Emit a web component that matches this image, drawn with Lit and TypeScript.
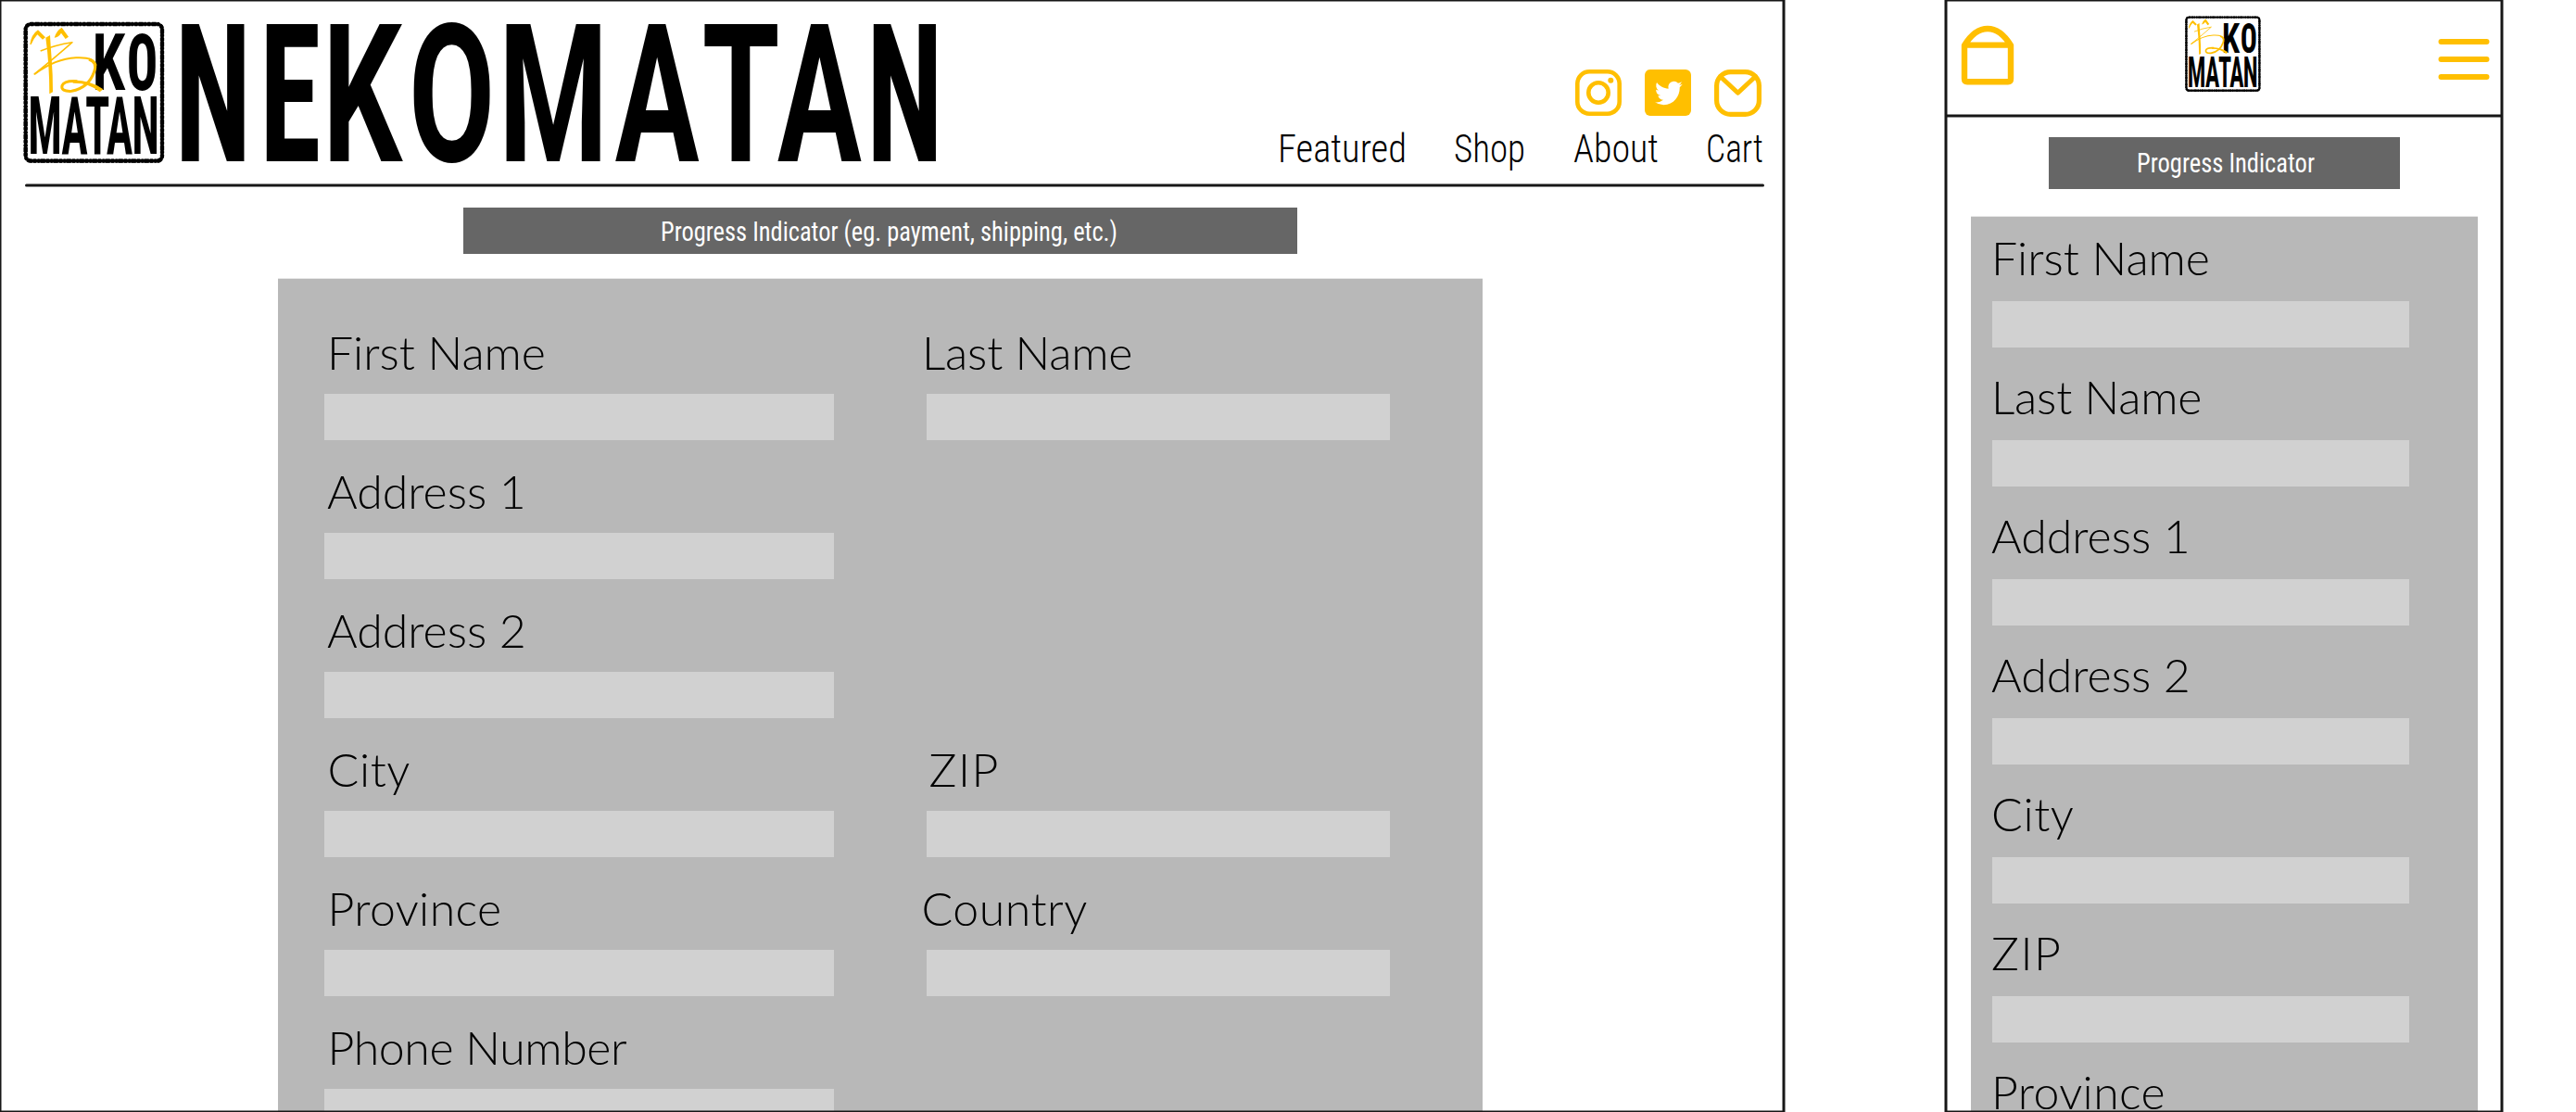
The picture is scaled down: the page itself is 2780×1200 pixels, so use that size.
import { LitElement, html, css, svg } from "lit";
import { customElement, property } from "lit/decorators.js";

const shared = css`
  * {
    box-sizing: border-box;
  }
  svg {
    display: block;
    overflow: visible;
    flex: none;
  }
  .narrow {
    font-family: "Roboto Condensed", Roboto, sans-serif;
    font-weight: 300;
  }
  .display {
    font-family: Roboto, sans-serif;
    font-weight: 700;
    font-kerning: none;
  }
`;

/** One glyph of a display word: character, origin, width axis (percent). */
type Glyph = [string, number, number];

const glyphs = (list: Glyph[]) =>
  list.map(([ch, x, wdth]) => svg`<tspan x=${x} style="font-stretch:${wdth}%">${ch}</tspan>`);

const TITLE: Glyph[] = [
  ["N", -11.5, 75],
  ["E", 129.1, 75],
  ["K", 234, 100],
  ["O", 377, 100],
  ["M", 526, 100],
  ["A", 719.7, 100],
  ["T", 864.2, 100],
  ["A", 989.3, 100],
  ["N", 1137, 75],
];

const STAMP_TOP: Glyph[] = [
  ["K", 461, 100],
  ["O", 632, 75],
];

const STAMP_BOTTOM: Glyph[] = [
  ["M", 195.6, 100],
  ["A", 425.7, 100],
  ["T", 590.7, 100],
  ["A", 736.3, 100],
  ["N", 910.5, 100],
];

/** Square stamp logo: hand-drawn mark, KO, and MATAN inside a rounded frame. */
@customElement("neko-logo")
class NekoLogo extends LitElement {
  @property({ type: Number }) size = 153;

  static styles = [
    shared,
    css`
      :host {
        display: block;
        flex: none;
      }
      .frame {
        fill: #fff;
        stroke: #000;
        stroke-width: 11;
      }
      .rough {
        fill: none;
        stroke: #000;
        stroke-width: 13;
        stroke-dasharray: 9 4 15 3 6 5;
      }
      .mark {
        fill: #ffbf00;
      }
      .line {
        fill: none;
        stroke: #ffbf00;
        stroke-linejoin: round;
      }
      .display {
        font-weight: 800;
      }
    `,
  ];

  render() {
    return html`<svg width=${this.size} height=${this.size} viewBox="75 69 459 459">
      <rect class="frame" x="83" y="78" width="442" height="443" rx="17" />
      <rect class="rough" x="83" y="78" width="442" height="443" rx="17" />
      <text class="display" transform="translate(0 291) scale(.65 1)" font-size="253">${glyphs(STAMP_TOP)}</text>
      <text class="display" transform="translate(0 498) scale(.47 1)" font-size="260">${glyphs(STAMP_BOTTOM)}</text>
      <path class="mark" d="M97 144 Q101 112 123 97 L147 121 L138 128 L121 112 Q108 126 101 144Z" />
      <path class="mark" d="M176 122 Q182 100 200 89 L222 119 L212 126 L198 107 Q190 120 176 122Z" />
      <path class="mark" d="M148 122 L162 114 Q164 150 167 190 Q171 240 171 298 L160 304 Q160 210 148 122Z" />
      <path class="line" stroke-width="4.5" d="M131 165 Q180 145 234 137 Q180 185 110 241" />
      <path class="line" stroke-width="6" d="M112 240 Q180 190 246 187 Q305 184 311 212" />
      <path class="line" stroke-width="9" d="M288 192 Q316 202 305 232 Q287 285 232 295 Q196 297 201 277 Q208 260 250 263" />
      <path class="mark" d="M236 259 Q300 262 334 289 L323 298 Q290 268 236 269Z" />
    </svg>`;
  }
}

const TRACKING: Record<string, number> = {
  "Last Name": -0.2,
  City: 0.6,
  ZIP: 1.5,
  Province: 0.4,
  Country: 0.5,
  "Phone Number": -0.4,
};

/** Label above an empty input block. */
@customElement("form-field")
class FormField extends LitElement {
  @property() label = "";
  @property({ type: Number }) inset = 0;

  static styles = [
    shared,
    css`
      :host {
        display: block;
        height: 150px;
      }
      .label {
        height: 100px;
        padding-top: var(--label-top, 25px);
        font: 300 50px/60px Lato, sans-serif;
        color: #000;
        white-space: nowrap;
      }
      .input {
        height: 50px;
        background: #d1d1d1;
      }
    `,
  ];

  render() {
    return html`
      <div class="label" style="text-indent:${this.inset}px;letter-spacing:${TRACKING[this.label] ?? 0}px">${this.label}</div>
      <div class="input"></div>
    `;
  }
}

@customElement("app-root")
class AppRoot extends LitElement {
  static styles = [
    shared,
    css`
      :host {
        display: flex;
        width: 2780px;
        height: 1200px;
        overflow: hidden;
        background: #fff;
      }
      .screen {
        position: relative;
        flex: none;
        height: 1200px;
      }
      .desktop {
        width: 1925px;
        margin-right: 175px;
      }
      .mobile {
        width: 600px;
        --label-top: 23px;
      }
      .outline {
        position: absolute;
        left: 0;
        top: 0;
        fill: none;
        stroke: #171717;
        stroke-width: 3;
      }
      .head {
        display: flex;
        height: 198px;
        padding: 23px 23px 0 25px;
      }
      .title {
        margin-left: 18px;
      }
      .menu {
        display: flex;
        flex-direction: column;
        align-items: flex-end;
        margin-left: auto;
        padding-top: 52px;
      }
      .icons {
        display: flex;
        gap: 25px;
        fill: #ffbf00;
        padding-right: 1px;
      }
      .stroke {
        fill: none;
        stroke: #ffbf00;
        stroke-linecap: round;
        stroke-linejoin: round;
      }
      .nav {
        display: flex;
        margin: 9px -1px 0 0;
      }
      .rule {
        margin-left: 27px;
      }
      .progress {
        display: flex;
        justify-content: center;
        background: #666;
        fill: #fff;
      }
      .progress .narrow {
        font-weight: 400;
      }
      .desktop .progress {
        width: 900px;
        height: 50px;
        margin: 22px 0 0 500px;
        padding-left: 19px;
      }
      .mobile .progress {
        width: 379px;
        height: 56px;
        margin: 21px 0 0 111px;
        padding-left: 3px;
      }
      .panel {
        background: #b8b8b8;
        border-top: 1px solid #e8e8e8;
        overflow: hidden;
      }
      .desktop .panel {
        display: grid;
        grid-template-columns: 560px 500px;
        grid-auto-rows: 150px;
        column-gap: 90px;
        align-content: start;
        width: 1300px;
        height: 900px;
        margin: 26px 0 0 300px;
        padding: 24px 0 0 50px;
      }
      .mobile .panel {
        width: 547px;
        height: 967px;
        margin: 29px 0 0 27px;
        padding: 0 74px 0 23px;
      }
      .mobile .first {
        margin-top: -9px;
      }
      .bar {
        display: flex;
        height: 123px;
        padding: 17px 13px 0 16px;
      }
      .bar neko-logo {
        margin: 0 191px 0 183.5px;
      }
    `,
  ];

  private desktopFields: Array<[string, number] | null> = [
    ["First Name", 3],
    ["Last Name", -5],
    ["Address 1", 3],
    null,
    ["Address 2", 3],
    null,
    ["City", 3.5],
    ["ZIP", 2.5],
    ["Province", 3.5],
    ["Country", -5.5],
    ["Phone Number", 3.5],
    null,
  ];

  private mobileFields = ["First Name", "Last Name", "Address 1", "Address 2", "City", "ZIP", "Province"];

  /** Single line of condensed text stretched to an exact width; y is the baseline. */
  private fit(text: string, width: number, size: number, height: number, y: number) {
    return html`<svg width=${width} height=${height}>
      <text class="narrow" x="0" y=${y} font-size=${size} textLength=${width} lengthAdjust="spacingAndGlyphs">${text}</text>
    </svg>`;
  }

  private outline(width: number) {
    return html`<svg class="outline" width=${width} height="1200">
      <rect x="0" y="0" width=${width} height="1200" />
    </svg>`;
  }

  private navItem(text: string, width: number, gap: number) {
    return html`<div style="margin-left:${gap}px">${this.fit(text, width, 42, 50, 40)}</div>`;
  }

  render() {
    return html`
      <section class="screen desktop">
        <header class="head">
          <neko-logo size="153"></neko-logo>
          <svg class="title" width="820" height="153">
            <text class="display" transform="translate(0 151) scale(.65 1)" font-size="208">${glyphs(TITLE)}</text>
          </svg>
          <div class="menu">
            <div class="icons">
              <svg width="50" height="50">
                <rect class="stroke" x="2.3" y="2.3" width="45.4" height="45.4" rx="13" stroke-width="4.6" />
                <circle class="stroke" cx="25" cy="25" r="10.7" stroke-width="4.6" />
                <circle cx="38.3" cy="11.7" r="3" />
              </svg>
              <svg width="50" height="50">
                <rect width="50" height="50" rx="6" />
                <path
                  fill="#fff"
                  transform="translate(11 9.9) scale(1.24 1.3)"
                  d="M23.95 4.57a10 10 0 0 1-2.82.77 4.96 4.96 0 0 0 2.16-2.72c-.95.55-2 .95-3.13 1.18a4.92 4.92 0 0 0-8.38 4.48C7.69 8.1 4.07 6.13 1.64 3.16a4.92 4.92 0 0 0 1.52 6.57 4.9 4.9 0 0 1-2.23-.61v.06a4.92 4.92 0 0 0 3.95 4.83 5 5 0 0 1-2.21.08 4.94 4.94 0 0 0 4.6 3.42A9.87 9.87 0 0 1 0 19.54a13.99 13.99 0 0 0 7.55 2.21c9.05 0 14-7.5 14-13.98 0-.21 0-.42-.02-.63a9.94 9.94 0 0 0 2.46-2.55z"
                />
              </svg>
              <svg width="51" height="51">
                <rect class="stroke" x="2.6" y="2.6" width="45.8" height="45.8" rx="15" stroke-width="5.2" />
                <path class="stroke" stroke-width="5" d="M6.5 7.5 L25.5 25.3 L44.5 7.5" />
              </svg>
            </div>
            <nav class="nav">
              ${this.navItem("Featured", 139, 0)} ${this.navItem("Shop", 77, 51)}
              ${this.navItem("About", 92, 51.5)} ${this.navItem("Cart", 62, 51.5)}
            </nav>
          </div>
        </header>
        <svg class="rule" width="1877" height="4">
          <line x1="1.5" y1="2" x2="1875.5" y2="2" stroke="#171717" stroke-width="3" stroke-linecap="round" />
        </svg>
        <div class="progress">
          ${this.fit("Progress Indicator (eg. payment, shipping, etc.)", 493, 29, 50, 36)}
        </div>
        <div class="panel">
          ${this.desktopFields.map((f, i) =>
            f
              ? html`<form-field
                  label=${f[0]}
                  .inset=${f[1]}
                  style="width:${i % 2 ? 500 : 550}px"
                ></form-field>`
              : html`<div></div>`
          )}
        </div>
        ${this.outline(1925)}
      </section>

      <section class="screen mobile">
        <header class="bar">
          <svg width="58" height="75">
            <path
              class="stroke"
              stroke-width="6.4"
              d="M4 32 V68 Q4 71.2 7 71.2 H51 Q54 71.2 54 68 V32 Q43 14 29 14 Q15 14 4 32 Z M5 31.6 H53"
            />
          </svg>
          <neko-logo size="82"></neko-logo>
          <svg width="56" height="75">
            <path class="stroke" stroke-width="6" d="M3.5 28 H52.5 M3.5 47 H52.5 M3.5 66 H52.5" />
          </svg>
        </header>
        <svg width="600" height="4">
          <line x1="0" y1="2" x2="600" y2="2" stroke="#171717" stroke-width="3.2" />
        </svg>
        <div class="progress">${this.fit("Progress Indicator", 192, 29, 56, 38)}</div>
        <div class="panel">
          <div class="first">
            ${this.mobileFields.map(
              (f) => html`<form-field label=${f} .inset=${-1}></form-field>`
            )}
          </div>
        </div>
        ${this.outline(600)}
      </section>
    `;
  }
}
